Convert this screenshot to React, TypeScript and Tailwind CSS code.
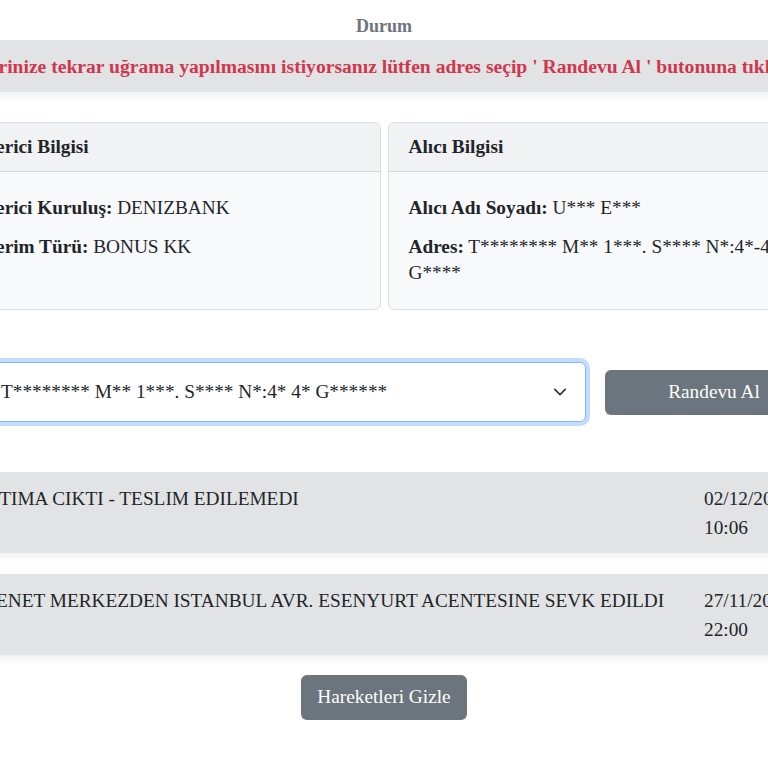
import React from 'react';

const movements = [
    { text: 'DAĞITIMA CIKTI - TESLIM EDILEMEDI', date: '02/12/2024', time: '10:06' },
    { text: 'TR. SENET MERKEZDEN ISTANBUL AVR. ESENYURT ACENTESINE SEVK EDILDI', date: '27/11/2024', time: '22:00' },
];

export default function App() {
    return (
        <div className="w-full overflow-hidden bg-white text-[19.3px] text-[#212529] flex justify-center font-['Liberation_Serif','Times_New_Roman',serif]">
            <div className="w-[910px] shrink-0 pt-[15px] pb-[40px]">
                <h5 className="text-center text-[18px] font-bold text-[#6c757d] leading-[22px]">Durum</h5>

                <div className="mt-[3px] h-[52px] pt-[2px] bg-[#e2e3e5] shadow-[0_4px_6px_rgba(0,0,0,0.06)] flex items-center justify-center">
                    <p className="text-[19.6px] font-bold text-[#d0364d] whitespace-nowrap">
                        Gönderinize tekrar uğrama yapılmasını istiyorsanız lütfen adres seçip ' Randevu Al ' butonuna tıklayınız.
                    </p>
                </div>

                <div className="mt-[30px] grid grid-cols-2 gap-[7px]">
                    <div className="rounded-md border border-[#dcdee0] bg-[#f8f9fa] overflow-hidden">
                        <div className="h-[49px] px-5 flex items-center bg-[#f1f2f3] border-b border-[#d6d8da] font-bold">Gönderici Bilgisi</div>
                        <div className="px-5 pt-[23px] pb-[23px] leading-[26px]">
                            <p className="mb-[13px]"><b>Gönderici Kuruluş:</b> DENIZBANK</p>
                            <p><b>Gönderim Türü:</b> BONUS KK</p>
                        </div>
                    </div>
                    <div className="rounded-md border border-[#dcdee0] bg-[#f8f9fa] overflow-hidden">
                        <div className="h-[49px] px-5 flex items-center bg-[#f1f2f3] border-b border-[#d6d8da] font-bold">Alıcı Bilgisi</div>
                        <div className="px-5 pt-[23px] pb-[23px] leading-[26px]">
                            <p className="mb-[13px]"><b>Alıcı Adı Soyadı:</b> U*** E***</p>
                            <p><b>Adres:</b> T******** M** 1***. S**** N*:4*-4* E** G****</p>
                        </div>
                    </div>
                </div>

                <div className="mt-[52px] flex items-center gap-[19px]">
                    <div className="w-[657px] h-[60px] rounded-md border border-[#86b7fe] ring-4 ring-[#0d6efd]/25 bg-white flex items-center pl-[71px] pr-[18px]">
                        <span className="flex-1 whitespace-nowrap">T******** M** 1***. S**** N*:4* 4* G******</span>
                        <svg width="14" height="14" viewBox="0 0 16 16" fill="none" stroke="#343a40" strokeWidth="2" strokeLinecap="round" strokeLinejoin="round">
                            <path d="M2 5l6 6 6-6" />
                        </svg>
                    </div>
                    <button className="w-[218px] h-[45px] rounded-md bg-[#6c757d] text-white">Randevu Al</button>
                </div>

                <div className="mt-[50px] flex flex-col gap-[21px]">
                    {movements.map((m) => (
                        <div key={m.date} className="flex bg-[#e2e3e5] pt-3 pb-[11px] pl-[22px] pr-[28px] shadow-[0_4px_6px_rgba(0,0,0,0.06)] leading-[29px]">
                            <div className="flex-1 whitespace-nowrap">{m.text}</div>
                            <div className="w-[107px] shrink-0">
                                <div>{m.date}</div>
                                <div>{m.time}</div>
                            </div>
                        </div>
                    ))}
                </div>

                <div className="mt-[20px] flex justify-center">
                    <button className="h-[45px] px-4 rounded-md bg-[#6c757d] text-white">Hareketleri Gizle</button>
                </div>
            </div>
        </div>
    );
}
